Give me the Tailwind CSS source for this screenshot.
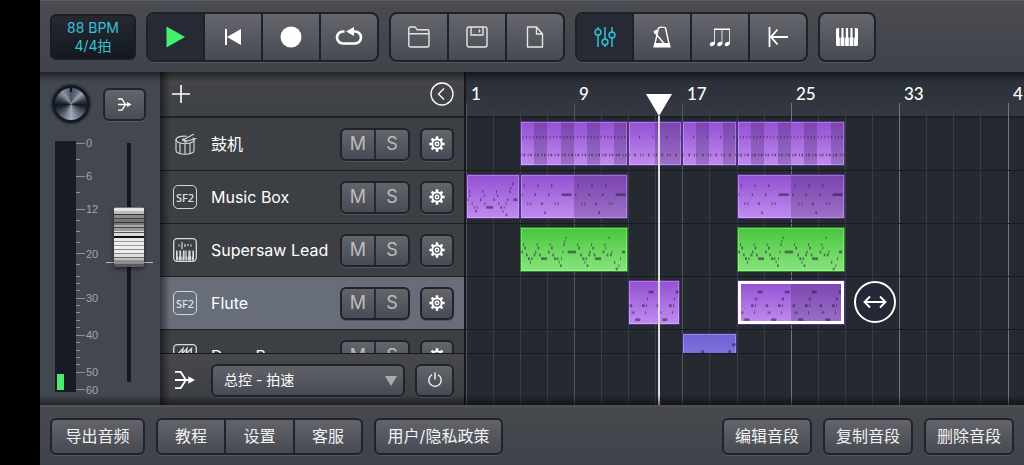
<!DOCTYPE html>
<html lang="zh-CN">
<head>
<meta charset="utf-8">
<meta name="viewport" content="width=device-width, initial-scale=1">
<title>音轨编辑器</title>
<script src="https://cdn.jsdelivr.net/npm/@tailwindcss/browser@4"></script>
</head>
<body class="bg-black">
<svg class="hidden" aria-hidden="true">
  <symbol id="gear" viewBox="0 0 20 20">
    <g fill="none" stroke="currentColor">
      <circle cx="10" cy="10" r="5.200" stroke-width="2.200"/>
      <circle cx="10" cy="10" r="1.900" stroke-width="1.600"/>
      <path stroke-width="2.800" d="M10 1.500v3M10 15.500v3M1.500 10h3M15.500 10h3M4 4l2.100 2.100M13.900 13.900l2.100 2.100M4 16l2.100-2.100M13.900 6.100l2.100-2.100"/>
    </g>
  </symbol>
  <symbol id="merge" viewBox="0 0 22 20">
    <path fill="none" stroke="currentColor" stroke-width="2" d="M1 1.500h6L12.500 10L7 18.500H1M1 10h15"/>
    <path fill="currentColor" d="M15 6l7 4-7 4z"/>
  </symbol>
  <symbol id="drum" viewBox="0 0 24 24">
    <g fill="none" stroke="currentColor" stroke-width="1.100" stroke-linecap="round">
      <path d="M13.500 4.300C7.500 3.700 3 5.300 3 7.700s4 4 9 4s9-1.600 9-4c0-.7-.4-1.300-1-1.800"/>
      <path d="M3 7.700v11c0 2 4 3.600 9 3.600s9-1.600 9-3.600v-11M7 11.300v10M12 12v10M17 11.300v10"/>
      <path d="M11 7.500L20.500 2.300M13 9.300L23 6.500"/>
      <circle cx="10.500" cy="7.800" r="1"/><circle cx="12.500" cy="9.400" r=".8"/>
    </g>
  </symbol>
  <symbol id="synth" viewBox="0 0 24 24">
    <rect x=".7" y=".7" width="22.600" height="22.600" rx="3.500" fill="none" stroke="currentColor" stroke-width="1.300"/>
    <path stroke="currentColor" stroke-width="1.200" d="M6 6.500v2M9 4v7M12 6v3M15 6v2M18 6.500v2"/>
    <path fill="currentColor" d="M3 12.500h18v10h-18z"/>
    <path stroke="#3d4046" stroke-width="1.700" d="M5.500 12v6.500M9 12v6.500M14.500 12v6.500M18.500 12v6.500"/>
    <path stroke="#3d4046" stroke-width=".7" d="M5.500 18v5M9 18v5M12 12v11M14.500 18v5M18.500 18v5"/>
  </symbol>
  <symbol id="saw" viewBox="0 0 24 24">
    <rect x=".7" y=".7" width="22.600" height="22.600" rx="3.500" fill="none" stroke="currentColor" stroke-width="1.300"/>
    <path fill="none" stroke="currentColor" stroke-width="1.400" d="M5 10L10 4.500L9 10L14 4.500L13 10L18.500 4.500L18 10"/>
  </symbol>
</svg>

<div class="flex h-screen bg-black font-[Inter,'Noto_Sans_CJK_SC',sans-serif] text-white">
  <div class="w-10 shrink-0"></div>
  <div class="flex min-w-0 flex-1 flex-col">

    <header class="flex h-[72px] shrink-0 items-center gap-2.5 border-t border-[#5d5e63] bg-linear-to-b from-[#4b4c51] to-[#3f424a] px-2.5">
      <button class="flex h-[46px] w-[86px] flex-col items-center justify-center rounded-md border-2 border-[#1a1d23] bg-linear-to-b from-[#252932] to-[#15191f] text-sm/[18px] text-[#34c3d6]"><span>88 BPM</span><span>4/4拍</span></button>

      <div class="flex h-[50px] divide-x-2 divide-[#1e2129] overflow-hidden rounded-lg border-2 border-[#1e2129] bg-linear-to-b from-[#66676d] to-[#474a53] shadow-[0_1px_0_#54565c]">
        <button aria-label="播放" class="grid w-[57px] place-items-center bg-[#252a34]"><svg class="h-6 w-6 text-[#43f16c]" viewBox="0 0 24 24"><path fill="currentColor" d="M2.500 1.500L21 12L2.500 22.500z"/></svg></button>
        <button aria-label="回到开头" class="grid w-[58px] place-items-center"><svg class="h-5 w-5" viewBox="0 0 20 20"><path fill="currentColor" d="M2 2h2v16h-2zM4 10L18 2v16z"/></svg></button>
        <button aria-label="录音" class="grid w-[58px] place-items-center"><svg class="h-[22px] w-[22px]" viewBox="0 0 22 22"><circle cx="11" cy="11" r="10.500" fill="currentColor"/></svg></button>
        <button aria-label="循环" class="grid w-14 place-items-center"><svg class="h-5 w-7" viewBox="0 0 28 20"><path fill="none" stroke="currentColor" stroke-width="2.600" d="M9.500 4.500H8a6 6 0 0 0 0 12h12a6 6 0 0 0 0-12h-3"/><path fill="currentColor" d="M11 4.500L19 0v9z"/></svg></button>
      </div>

      <div class="flex h-[50px] divide-x-2 divide-[#1e2129] overflow-hidden rounded-lg border-2 border-[#1e2129] bg-linear-to-b from-[#66676d] to-[#474a53] text-[#e6e6e8] shadow-[0_1px_0_#54565c]">
        <button aria-label="打开" class="grid w-[58px] place-items-center"><svg class="h-[22px] w-[22px]" viewBox="0 0 22 22" fill="none" stroke="currentColor" stroke-width="1.400" stroke-linejoin="round"><path d="M.8 19V2.500Q.8 1 2.300 1h5L9 3.700h10.500Q21 3.700 21 5.200V19q0 2-2 2H2.800q-2 0-2-2zM.8 7.700H21"/></svg></button>
        <button aria-label="保存" class="grid w-[58px] place-items-center"><svg class="h-[22px] w-[22px]" viewBox="0 0 22 22" fill="none" stroke="currentColor" stroke-width="1.400" stroke-linejoin="round"><rect x="1" y="1" width="20" height="20" rx="2"/><path d="M5 1v8h12V1M13.500 3.500v3"/></svg></button>
        <button aria-label="新建" class="grid w-14 place-items-center"><svg class="h-[22px] w-[22px]" viewBox="0 0 22 22" fill="none" stroke="currentColor" stroke-width="1.400" stroke-linejoin="round"><path d="M3.500 1h9L18.500 8v13h-15zM12.500 1v7h6"/></svg></button>
      </div>

      <div class="flex h-[50px] divide-x-2 divide-[#1e2129] overflow-hidden rounded-lg border-2 border-[#1e2129] bg-linear-to-b from-[#66676d] to-[#474a53] shadow-[0_1px_0_#54565c]">
        <button aria-label="混音器" class="grid w-[57px] place-items-center bg-[#252a34] text-[#2fbcd0]"><svg class="h-[22px] w-[22px]" viewBox="0 0 22 22" fill="none" stroke="currentColor" stroke-width="1.600"><path d="M4 1v2.500M4 9v12M11 1v12M11 19v2M18 1v5M18 12v9"/><circle cx="4" cy="6.200" r="2.900"/><circle cx="11" cy="16" r="2.900"/><circle cx="18" cy="9" r="2.900"/></svg></button>
        <button aria-label="节拍器" class="grid w-[58px] place-items-center"><svg class="h-[22px] w-[22px]" viewBox="0 0 22 22" fill="none" stroke="currentColor" stroke-width="1.400"><path d="M7.500 1.800Q11 .5 14.500 1.800L18.500 20H3.500zM3 5.500L13 17.500"/><path fill="currentColor" stroke="none" d="M3.300 17h15.400l1 4.500H2.300zM2.500 5.500l3-2 1.500 2.200-3 2z"/></svg></button>
        <button aria-label="音符" class="grid w-[58px] place-items-center"><svg class="h-[22px] w-[22px]" viewBox="0 0 22 22"><path fill="none" stroke="currentColor" d="M5.500 18V3.500M13 18V3.500M20.500 18V3.500" stroke-width=".8"/><path fill="currentColor" d="M5 2.500h16v1.600H5z"/><g fill="currentColor"><ellipse cx="3.300" cy="18" rx="2.700" ry="1.900" transform="rotate(-25 3.300 18)"/><ellipse cx="10.800" cy="18" rx="2.700" ry="1.900" transform="rotate(-25 10.800 18)"/><ellipse cx="18.300" cy="18" rx="2.700" ry="1.900" transform="rotate(-25 18.300 18)"/></g></svg></button>
        <button aria-label="跳到起点" class="grid w-14 place-items-center"><svg class="h-[22px] w-[22px]" viewBox="0 0 22 22" fill="none" stroke="currentColor" stroke-width="1.800"><path d="M2.500 1v20M21 11H4M10.500 3.500L4 11l6.500 7.500"/></svg></button>
      </div>

      <button aria-label="键盘" class="grid h-[50px] w-[58px] place-items-center rounded-lg border-2 border-[#1e2129] bg-linear-to-b from-[#66676d] to-[#474a53] shadow-[0_1px_0_#54565c]"><svg class="h-[22px] w-6" viewBox="0 0 24 22"><rect x="1" y="2" width="22" height="18" rx="1.500" fill="currentColor"/><path stroke="#4d4f56" stroke-width="2.200" d="M5.300 2v9.500M9.700 2v9.500M14.300 2v9.500M18.700 2v9.500"/><path stroke="#6a6c72" stroke-width=".8" d="M5.300 11v9M9.700 11v9M14.300 11v9M18.700 11v9"/></svg></button>
    </header>

    <main class="relative flex min-h-0 flex-1">
      <section class="flex w-[120px] shrink-0 flex-col bg-[#434850]" aria-label="主音量">
        <div class="flex items-center justify-between pt-[11px] pr-3.5 pl-2.5">
          <div role="img" aria-label="声像" class="grid h-[42px] w-[42px] place-items-center rounded-full bg-[#353a43]">
            <div class="flex h-[38px] w-[38px] justify-center rounded-full border-3 border-[#141a24] bg-[conic-gradient(#485060,#6f7684_30deg,#9ba3b0_45deg,#333944_75deg,#11161f_95deg,#4d5461_125deg,#a4acba_180deg,#4d5461_225deg,#11161f_265deg,#39404b_290deg,#8f97a5_325deg,#485060)]"><span class="h-1 w-0.5 bg-[#10141c]"></span></div>
          </div>
          <button aria-label="路由" class="grid h-[33px] w-[43px] place-items-center rounded-md border-2 border-[#20232b] bg-linear-to-b from-[#63656b] to-[#4a4d55] shadow-[0_1px_0_#565a61]"><svg class="h-[13px] w-[15px]"><use href="#merge"/></svg></button>
        </div>
        <div class="relative mt-2 flex">
          <svg class="h-[262px] w-[120px]" viewBox="0 0 120 262" font-family="Liberation Sans, Arial, sans-serif" font-size="11" fill="#a3a6ab">
            <rect x="15" y="8" width="21" height="251" fill="#171c26"/>
            <rect x="17" y="241" width="7" height="16" fill="#4fe86e"/>
            <path stroke="#8b8e94" d="M36 10.500h9M36 43.500h9M36 76.500h9M36 120.500h9M36 165.500h9M36 202.500h9M36 239.500h9M36 256.500h9M36 26.500h4M36 59.500h4M36 87.500h4M36 98.500h4M36 109.500h4M36 131.500h4M36 143.500h4M36 150.500h4M36 157.500h4M36 172.500h4M36 179.500h4M36 187.500h4M36 194.500h4M36 209.500h4M36 217.500h4M36 224.500h4M36 231.500h4"/>
            <text x="46" y="14">0</text><text x="46" y="47">6</text><text x="46" y="80">12</text><text x="46" y="125">20</text><text x="46" y="169">30</text><text x="46" y="206">40</text><text x="46" y="243">50</text><text x="46" y="261">60</text>
            <path d="M66 129.500h47" stroke="#b7babf"/>
            <rect x="87" y="10" width="4" height="239" fill="#14171d"/>
          </svg>
          <input type="range" aria-label="音量推子" min="0" max="100" value="64" class="absolute top-2.5 left-[74px] m-0 h-[239px] w-[30px] appearance-none bg-transparent [direction:rtl] [writing-mode:vertical-lr] [&::-webkit-slider-thumb]:h-[60px] [&::-webkit-slider-thumb]:w-[30px] [&::-webkit-slider-thumb]:appearance-none [&::-webkit-slider-thumb]:rounded-xs [&::-webkit-slider-thumb]:shadow-[0_2px_4px_rgba(0,0,0,.5)] [&::-webkit-slider-thumb]:bg-[linear-gradient(#777_0_1px,#e4e4e4_1px_4px,#bcbcbc_4px_7px,#333_7px_8px,#8a8a8a_8px_11px,#444_11px_12px,#777_12px_15px,#333_15px_16px,#777_16px_18px,#aaa_18px_20px,#444_20px_21px,#999_21px_24px,#ddd_24px_25px,#555_25px_26px,#d8d8d8_26px_29px,#111_29px_31px,#e8e8e8_31px_34px,#999_34px_35px,#eee_35px_38px,#999_38px_39px,#f0f0f0_39px_42px,#888_42px_43px,#eee_43px_46px,#888_46px_47px,#ddd_47px_50px,#666_50px_51px,#c0c0c0_51px_53px,#8c8c8c_53px_57px,#5a5a5a_57px)]">
        </div>
      </section>

      <section class="relative flex w-[306px] shrink-0 flex-col border-r-2 border-[#15181d] bg-[#3c3f43]" aria-label="音轨">
        <div class="flex h-[46px] shrink-0 items-center justify-between border-b-2 border-[#1e2127] bg-linear-to-b from-[#46474c] to-[#3d4044] pr-2.5 pl-3">
          <button aria-label="添加音轨"><svg class="h-[18px] w-[18px]" viewBox="0 0 18 18"><path stroke="currentColor" stroke-width="1.600" d="M9 0v18M0 9h18"/></svg></button>
          <button aria-label="收起"><svg class="h-6 w-6" viewBox="0 0 24 24" fill="none" stroke="currentColor" stroke-width="1.300"><circle cx="12" cy="12" r="11"/><path d="M14 6.500L8.500 12l5.500 5.500"/></svg></button>
        </div>
        <ul id="tracks" class="min-h-0 flex-1 overflow-hidden"></ul>
        <div class="flex h-[52px] shrink-0 items-center border-t border-[#16191e] bg-linear-to-b from-[#47484d] to-[#3a3d42] pt-px pr-2.5 pl-3.5">
          <svg class="h-5 w-[21px]" aria-hidden="true"><use href="#merge"/></svg>
          <div class="relative ml-4 flex-1">
            <select aria-label="自动化参数" class="block h-[33px] w-full appearance-none rounded-md border-2 border-[#20232b] bg-linear-to-b from-[#606268] to-[#484b53] px-[11px] text-sm shadow-[0_1px_0_#54565c]"><option>总控 - 拍速</option></select>
            <svg class="pointer-events-none absolute top-3 right-2 h-2.5 w-3" viewBox="0 0 12 10"><path fill="#a9abaf" d="M0 0h12L6 10z"/></svg>
          </div>
          <button aria-label="启用自动化" class="ml-2.5 grid h-[33px] w-[39px] place-items-center rounded-md border-2 border-[#20232b] bg-linear-to-b from-[#63656b] to-[#484b53] shadow-[0_1px_0_#54565c]"><svg class="h-4 w-4" viewBox="0 0 16 16" fill="none" stroke="currentColor" stroke-width="1.300"><path d="M5 2.800a6.200 6.200 0 1 0 6 0M8 .5v7"/></svg></button>
        </div>
        <div class="pointer-events-none absolute inset-y-0 left-0 w-2.5 bg-linear-to-r from-black/50 to-transparent"></div>
      </section>

      <section id="timeline" class="relative flex min-w-0 flex-1 flex-col overflow-hidden bg-[#252930]" aria-label="时间线">
        <div class="h-[46px] shrink-0 border-b-2 border-[#1a1e26] bg-linear-to-b from-[#2a2e36] to-[#343942]"></div>
        <div id="grid" class="absolute inset-0"></div>
        <div id="lanes" class="relative min-h-0 flex-1 overflow-hidden"></div>
        <div class="h-[52px] shrink-0 border-t border-[#15191f]"></div>
        <div class="absolute top-[22px] bottom-0 left-[180px] flex w-[26px] flex-col items-center">
          <svg class="h-[22px] w-[26px] shrink-0" viewBox="0 0 26 22"><path fill="#fff" d="M0 0h26L13 22z"/></svg>
          <div class="w-0.5 flex-1 bg-[#dcdcdf]"></div>
        </div>
        <button aria-label="调整长度" class="absolute top-[209px] left-[388px] grid h-[42px] w-[42px] place-items-center rounded-full border-2 border-white bg-[#262837]"><svg class="h-4 w-6" viewBox="0 0 24 16" fill="none" stroke="currentColor" stroke-width="1.900"><path d="M1.500 8h21M7 2.500L1.500 8 7 13.500M17 2.500L22.500 8 17 13.500"/></svg></button>
      </section>
      <div class="pointer-events-none absolute inset-x-0 top-0 h-2.5 bg-linear-to-b from-black/50 to-transparent"></div>
      <div class="pointer-events-none absolute inset-x-0 bottom-0 h-2.5 bg-linear-to-t from-black/50 to-transparent"></div>
    </main>

    <footer class="flex h-[60px] shrink-0 items-center gap-[11px] border-t-2 border-[#505157] bg-linear-to-b from-[#48494e] to-[#3e424b] px-2.5 text-base text-[#f2f2f3]">
      <button class="h-[37px] w-[95px] rounded-md border-2 border-[#20232b] bg-linear-to-b from-[#63646a] to-[#474a53] shadow-[0_1px_0_#54565c]">导出音频</button>
      <div class="flex h-[37px] divide-x-2 divide-[#20232b] overflow-hidden rounded-md border-2 border-[#20232b] bg-linear-to-b from-[#63646a] to-[#474a53] shadow-[0_1px_0_#54565c]">
        <button class="w-[68px]">教程</button><button class="w-[69px]">设置</button><button class="w-[66px]">客服</button>
      </div>
      <button class="h-[37px] w-[129px] rounded-md border-2 border-[#20232b] bg-linear-to-b from-[#63646a] to-[#474a53] shadow-[0_1px_0_#54565c]">用户/隐私政策</button>
      <div class="flex-1"></div>
      <button class="h-[37px] w-[90px] rounded-md border-2 border-[#20232b] bg-linear-to-b from-[#63646a] to-[#474a53] shadow-[0_1px_0_#54565c]">编辑音段</button>
      <button class="h-[37px] w-[90px] rounded-md border-2 border-[#20232b] bg-linear-to-b from-[#63646a] to-[#474a53] shadow-[0_1px_0_#54565c]">复制音段</button>
      <button class="h-[37px] w-[90px] rounded-md border-2 border-[#20232b] bg-linear-to-b from-[#63646a] to-[#474a53] shadow-[0_1px_0_#54565c]">删除音段</button>
    </footer>
  </div>
</div>

<script>
const BAR = 13.55;
const barX = n => Math.floor(n * BAR);

/* Track headers */
const sf2 = '<span class="grid h-6 w-6 place-items-center rounded-[5px] border border-[#d5d6d8] font-[Noto_Sans,sans-serif] text-[11px]/none font-medium text-[#e2e3e5]">SF2</span>';
const icon = id => `<svg class="h-6 w-6 text-[#d9dadc]" aria-hidden="true"><use href="#${id}"/></svg>`;
const tracks = [
  ['鼓机', icon('drum')], ['Music Box', sf2], ['Supersaw Lead', icon('synth')], ['Flute', sf2, true], ['Deep Bass', icon('saw')],
];
document.getElementById('tracks').innerHTML = tracks.map(([name, ic, selected]) => `
  <li class="flex h-[53px] items-center border-b border-[#1b1e24] pr-2.5 pl-[13px] ${selected ? 'bg-[#676e79]' : 'bg-[#3c3f43]'}">
    ${ic}
    <span class="ml-3.5 flex-1 text-base whitespace-nowrap">${name}</span>
    <div class="flex h-[33px] divide-x-2 divide-[#262a32] overflow-hidden rounded-md border-2 border-[#20232b] bg-linear-to-b from-[#63656b] to-[#484b53] text-lg/none text-[#bcbdc0] shadow-[0_1px_0_#54565c]">
      <button class="w-[34px]" aria-label="${name} 静音">M</button><button class="w-8" aria-label="${name} 独奏">S</button>
    </div>
    <button class="ml-2.5 grid h-[33px] w-[34px] place-items-center rounded-md border-2 border-[#20232b] bg-linear-to-b from-[#63656b] to-[#484b53] shadow-[0_1px_0_#54565c]" aria-label="${name} 设置"><svg class="h-[18px] w-[18px]"><use href="#gear"/></svg></button>
  </li>`).join('');

/* Bar lines and ruler numbers */
let g = '';
for (let b = 0; b <= 42; b += 2) {
  const major = b % 8 === 0;
  const cls = major
    ? (b >= 24 ? 'absolute top-[31px] bottom-0 w-px bg-[#73767b]' : 'absolute top-[31px] bottom-0 w-px bg-[#53565b]')
    : 'absolute top-[38px] bottom-0 w-px bg-[#3b3e44]';
  g += `<div class="${cls}" style="left:${barX(b)}px"></div>`;
  if (major) g += `<span class="absolute top-3 pl-[5px] font-[Lato,sans-serif] text-[17px]/[20px] font-medium" style="left:${barX(b)}px">${b + 1}</span>`;
}
document.getElementById('grid').innerHTML = g;

/* Notes are [x, y, width] in thirds of a pixel from the clip's corner */
const shift = (n, d) => n.map(([x, y, w]) => [x + d, y, w]);
const drums = (bars, sparse) => {
  const n = [];
  for (let b = 0; b < bars; b++) {
    const x = b * 40.7;
    (sparse ? [30] : [5, 15, 25, 35]).forEach(d => n.push([x + d, 41, 3]));
    (sparse ? [0, 16, 33] : [0, 7, 20, 28]).forEach((d, i) => n.push([x + d, 95, i % 2 ? 5 : 3]));
  }
  return n;
};
const boxA = [[7,58],[6,46],[0,70,4],[14,82],[20,93],[25,105,5],[29,93],[39,70,4],[46,46],[50,58],[52,82],[58,93,20],[80,70,4],[87,46],[90,58],[94,82],[100,93,5],[106,105],[110,93],[116,116,5],[116,82],[120,70,4],[127,46,4],[130,35],[135,23,4],[139,70,12]];
const boxB = [[8,28],[49,28,4],[90,28,4],[1,55],[41,55,4],[81,55,4],[122,55,30],[19,82],[28,82],[60,82,5],[101,82],[110,82],[70,109,5]];
const lead = [[0,68,6],[6,46],[10,56,5],[15,77,5],[21,88,6],[27,99],[31,88,4],[38,77,5],[42,68,4],[47,46],[50,56,5],[54,77,5],[60,88,18],[81,68,5],[86,46],[90,56,5],[94,77,5],[99,88,6],[107,88,5],[113,98],[117,109,5],[120,88],[124,68],[127,46,4],[130,36],[134,25],[140,68,25],[168,46],[172,56,5],[178,77,5],[184,88,6],[190,99],[197,109,5],[194,88,4],[202,77,5],[205,68,4],[210,46],[214,56,5],[218,77,5],[222,88,18],[245,68,5],[250,46],[253,56],[257,77,5],[263,25],[267,77,5],[271,68],[279,99,4],[284,119,6],[292,109],[297,88],[303,68,9]];
const flute = [[2,70,7],[8,91],[13,91],[19,112,15],[39,70,8],[48,91],[51,70],[54,50],[59,29,15]];
const fluteBars = [0, 81, 162, 243].flatMap(d => shift([...flute, [50,50]], d));
const violet = 'bg-linear-to-b from-[#944fd2] to-[#c08cf0] outline-[#54308a]';
const green = 'bg-linear-to-b from-[#48c63c] to-[#86e47c] outline-[#258a22]';
const blue = 'bg-linear-to-b from-[#7161d4] to-[#8f86e8] outline-[#383080]';
const lanes = [
  [[4, 8, violet, drums(8), 8], [12, 4, violet, drums(4, true), 2], [16, 4, violet, drums(4, true), 4], [20, 8, violet, drums(8), 8]],
  [[0, 4, violet, boxA, 0], [4, 8, violet, [...boxB, ...shift(boxB, 162)], 2], [20, 8, violet, [...boxB, ...shift(boxB, 162)], 2]],
  [[4, 8, green, lead, 0], [20, 8, green, lead, 0]],
  [[12, 3.8, violet, [...flute, ...shift(flute, 81)], 0], [20, 8, violet, fluteBars, 2, true]],
  [[16, 4, blue, [[54,49,10],[136,49,8],[147,28,12]], 0]],
];
document.getElementById('lanes').innerHTML = lanes.map(clips => `
  <div class="relative h-[53px] border-b border-[#171b22]">${clips.map(([start, len, colour, notes, parts, selected]) => {
    const x = barX(start) + 1, w = barX(start + len) - barX(start) - 2, step = w / (parts || 1);
    let s = '';
    for (let i = 1; i < parts; i += 2) s += `<rect x="${Math.round(i * step)}" y="0" width="${Math.round(step)}" height="43" fill="#30204a" fill-opacity=".25"/>`;
    s += notes.map(([nx, ny, nw = 3]) => `<rect x="${nx / 3}" y="${ny / 3}" width="${nw / 3}" height="2.700" fill="#281a3c" fill-opacity=".55"/>`).join('');
    return `<div class="absolute top-1 h-[43px] overflow-hidden outline-1 ${colour}" style="left:${x}px;width:${w}px"><svg class="absolute inset-0 h-full w-full">${s}</svg><div class="${selected ? 'absolute inset-0 border-3 border-white' : 'absolute inset-0 border border-white/25'}"></div></div>`;
  }).join('')}</div>`).join('');
</script>
</body>
</html>
